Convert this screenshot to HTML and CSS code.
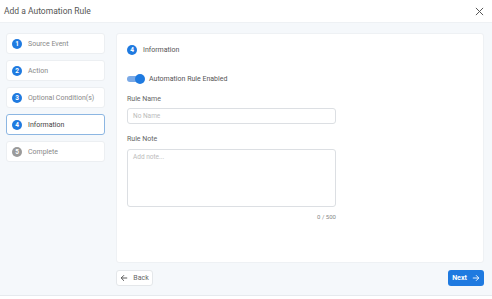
FILE: index.html
```html
<!DOCTYPE html>
<html>
<head>
<meta charset="utf-8">
<link rel="stylesheet" href="styles.css">
</head>
<body>
<div class="dialog">
  <header class="head">
    <span class="title">Add a Automation Rule</span>
    <svg class="close" width="9" height="9" viewBox="0 0 10 10"><path d="M1 1L9 9M9 1L1 9" stroke="#555" stroke-width="1.1" fill="none"/></svg>
  </header>
  <div class="body">
    <div class="content">
      <nav class="steps">
        <div class="step"><span class="num">1</span><span class="lbl">Source Event</span></div>
        <div class="step"><span class="num">2</span><span class="lbl">Action</span></div>
        <div class="step"><span class="num">3</span><span class="lbl">Optional Condition(s)</span></div>
        <div class="step active"><span class="num">4</span><span class="lbl">Information</span></div>
        <div class="step done"><span class="num">5</span><span class="lbl">Complete</span></div>
      </nav>
      <main class="panel">
        <div class="panel-title"><span class="num big">4</span><span>Information</span></div>
        <div class="toggle-row">
          <span class="toggle"><span class="knob"></span></span>
          <span>Automation Rule Enabled</span>
        </div>
        <label class="label">Rule Name</label>
        <div class="input">No Name</div>
        <label class="label note-label">Rule Note</label>
        <div class="textarea">Add note...</div>
        <div class="counter">0 / 500</div>
      </main>
    </div>
    <div class="actions">
      <button class="btn back">
        <svg class="ico" width="8" height="8" viewBox="0 0 10 10"><path d="M9 5H1.5M5 1.5L1.5 5L5 8.5" stroke="#444" stroke-width="1.1" fill="none"/></svg>
        <span>Back</span>
      </button>
      <button class="btn next">
        <span>Next</span>
        <svg class="ico" width="8" height="8" viewBox="0 0 10 10"><path d="M1 5H8.5M5 1.5L8.5 5L5 8.5" stroke="#fff" stroke-width="1.1" fill="none"/></svg>
      </button>
    </div>
  </div>
</div>
</body>
</html>
```
FILE: styles.css
```css
* { box-sizing: border-box; }
html, body { margin: 0; padding: 0; }
body {
  width: 492px;
  height: 299px;
  background: #fff;
  font-family: Roboto, "Liberation Sans", sans-serif;
  color: #333;
  overflow: hidden;
}
.dialog { display: flex; flex-direction: column; height: 299px; }
.head {
  height: 23px;
  display: flex;
  align-items: center;
  justify-content: space-between;
  padding: 0 8px 0 4px;
  font-size: 8.5px;
  color: #555;
  border-bottom: 1px solid #eef1f4;
}
.close { margin-top: 1px; }
.body {
  background: #f5f8fb;
  height: 273px;
  padding: 10px 8px 0 6px;
  border-bottom: 1px solid #e6eaee;
}
.content { display: flex; gap: 11px; }
.steps { width: 99px; display: flex; flex-direction: column; gap: 6px; }
.step {
  height: 21px;
  background: #fff;
  border: 1px solid #eceff2;
  border-radius: 3px;
  display: flex;
  align-items: center;
  padding-left: 5px;
  gap: 6px;
  font-size: 7px;
  color: #888;
}
.step.active { border-color: #8cb6e2; color: #444; }
.num {
  width: 10px; height: 10px;
  border-radius: 50%;
  background: #1f7ae0;
  color: #fff;
  font-size: 6.5px;
  font-weight: 700;
  display: inline-flex;
  align-items: center;
  justify-content: center;
  flex: none;
}
.step.done .num { background: #9a9a9a; }
.panel {
  width: 368px;
  height: 230px;
  background: #fff;
  border: 1px solid #eef1f4;
  border-radius: 3px;
  padding: 11px 10px 0 10px;
  display: flex;
  flex-direction: column;
  font-size: 7px;
  color: #555;
}
.panel-title { display: flex; align-items: center; gap: 6px; height: 10px; }
.toggle-row { display: flex; align-items: center; gap: 4px; margin-top: 19px; height: 10px; }
.toggle {
  width: 18px; height: 10px;
  position: relative;
  display: inline-block;
}
.toggle::before {
  content: "";
  position: absolute;
  left: 0; top: 2px;
  width: 17px; height: 6px;
  border-radius: 3px;
  background: #7aa9e6;
}
.knob {
  position: absolute;
  right: 0; top: 0;
  width: 10px; height: 10px;
  border-radius: 50%;
  background: #1f7ae0;
}
.label { display: block; margin-top: 11px; height: 9px; line-height: 9px; color: #666; }
.note-label { margin-top: 11px; }
.input {
  margin-top: 4px;
  width: 209px; height: 16px;
  border: 1px solid #dcdfe3;
  border-radius: 3px;
  padding-left: 5px;
  line-height: 14px;
  color: #bbb;
  font-size: 6.5px;
}
.textarea {
  margin-top: 5px;
  width: 209px; height: 58px;
  border: 1px solid #dcdfe3;
  border-radius: 3px;
  padding: 3px 5px;
  color: #bbb;
  font-size: 6.5px;
}
.counter { width: 209px; text-align: right; margin-top: 6px; font-size: 6px; color: #888; }
.actions {
  display: flex;
  justify-content: space-between;
  padding: 7px 0 0 110px;
}
.btn {
  height: 16px;
  border-radius: 3px;
  font-family: inherit;
  font-size: 7px;
  display: inline-flex;
  align-items: center;
  justify-content: center;
  gap: 5px;
  padding: 0;
  cursor: pointer;
}
.ico { flex: none; display: block; }
.btn.back { background: #fff; border: 1px solid #e4e7ea; color: #666; width: 37px; }
.btn.next { background: #1f7ae0; border: none; color: #fff; width: 36px; font-weight: 700; }
```
